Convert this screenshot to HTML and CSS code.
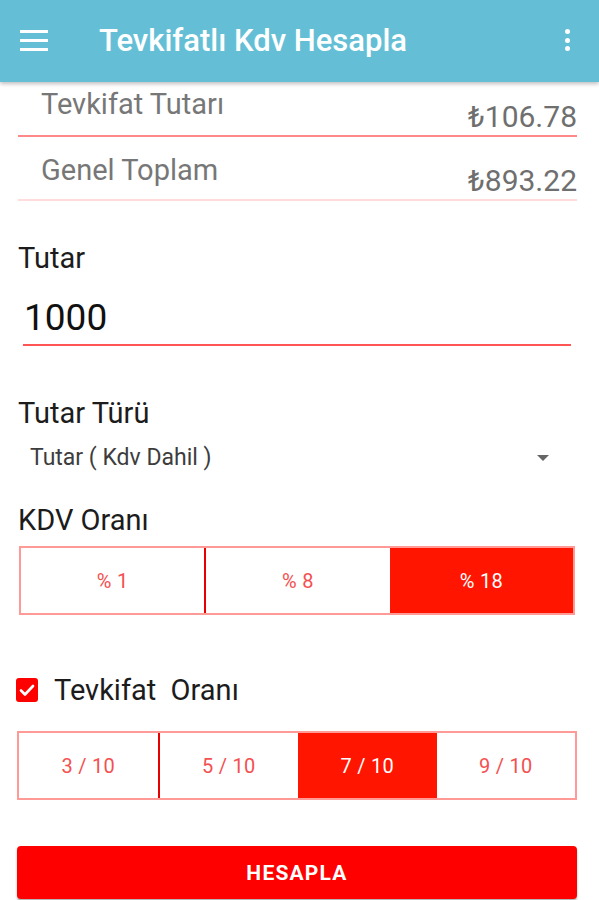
FILE: index.html
```html
<!DOCTYPE html>
<html lang="tr">
<head>
<meta charset="utf-8">
<title>Tevkifatlı Kdv Hesapla</title>
<link rel="stylesheet" href="styles.css">
</head>
<body>
<header class="toolbar">
  <div class="menu-icon"><span></span><span></span><span></span></div>
  <h1 class="title">Tevkifatlı Kdv Hesapla</h1>
  <div class="kebab"><span></span><span></span><span></span></div>
</header>
<main class="content">
  <div class="result-row first">
    <span class="result-label">Tevkifat Tutarı</span>
    <span class="result-value">₺106.78</span>
  </div>
  <div class="result-row second">
    <span class="result-label">Genel Toplam</span>
    <span class="result-value">₺893.22</span>
  </div>

  <div class="field-label tutar-label">Tutar</div>
  <div class="amount-input">1000</div>

  <div class="field-label type-label">Tutar Türü</div>
  <div class="spinner">
    <span>Tutar ( Kdv Dahil )</span>
    <span class="spinner-arrow"></span>
  </div>

  <div class="field-label kdv-label">KDV Oranı</div>
  <div class="segments kdv">
    <div class="seg">% 1</div>
    <div class="seg">% 8</div>
    <div class="seg active">% 18</div>
  </div>

  <div class="check-row">
    <span class="checkbox">
      <svg width="22" height="24" viewBox="0 0 22 24"><path d="M5 12.5 L9 16.5 L17 8" fill="none" stroke="#fff" stroke-width="2.6" stroke-linecap="round" stroke-linejoin="round"/></svg>
    </span>
    <span class="check-label">Tevkifat&nbsp; Oranı</span>
  </div>
  <div class="segments tev">
    <div class="seg">3 / 10</div>
    <div class="seg">5 / 10</div>
    <div class="seg active">7 / 10</div>
    <div class="seg">9 / 10</div>
  </div>

  <button class="calc-btn">HESAPLA</button>
</main>
</body>
</html>
```
FILE: styles.css
```css
* { box-sizing: border-box; }
html, body { margin: 0; padding: 0; }
body {
  width: 599px;
  height: 900px;
  overflow: hidden;
  background: #fff;
  font-family: Roboto, "Liberation Sans", sans-serif;
  color: #212121;
}
.toolbar {
  position: relative;
  z-index: 2;
  height: 82px;
  background: #64bfd6;
  display: flex;
  align-items: center;
  padding: 0 29px 0 20px;
  box-shadow: 0 2px 4px rgba(0,0,0,0.25);
}
.menu-icon {
  width: 28px;
  display: flex;
  flex-direction: column;
  gap: 6px;
  margin-top: -2px;
}
.menu-icon span {
  display: block;
  height: 3px;
  background: #fff;
}
.title {
  margin: 0 0 0 51px;
  font-size: 31px;
  line-height: 36px;
  font-weight: 500;
  color: #fff;
  flex: 1;
}
.kebab {
  display: flex;
  flex-direction: column;
  gap: 3.5px;
  margin-top: -2px;
}
.kebab span {
  width: 5px;
  height: 5px;
  border-radius: 50%;
  background: #fff;
}
.content {
  padding: 0 22px 0 18px;
}
.result-row {
  display: flex;
  justify-content: space-between;
  border-bottom: 2px solid #f88;
}
.result-row.first { height: 55px; padding: 8px 0 0 23px; }
.result-row.second { height: 64px; padding: 19px 0 0 23px; border-bottom-color: #fdd; }
.result-label {
  font-size: 29px;
  line-height: 28px;
  color: #777;
  align-self: flex-start;
}
.result-value {
  font-size: 30px;
  line-height: 30px;
  color: #6f6f6f;
  align-self: flex-end;
  padding-bottom: 3px;
}
.field-label {
  font-size: 29px;
  line-height: 28px;
  color: #1c1c1c;
}
.tutar-label { margin-top: 43px; }
.amount-input {
  margin: 26px 6px 0 5px;
  padding: 0 0 6px 1px;
  font-size: 37px;
  line-height: 40px;
  color: #111;
  border-bottom: 2px solid #f55;
}
.type-label { margin-top: 53px; }
.spinner {
  margin-top: 19px;
  padding: 0 28px 0 12px;
  display: flex;
  justify-content: space-between;
  align-items: center;
  font-size: 23px;
  line-height: 24px;
  color: #3d3d3d;
}
.spinner-arrow {
  width: 0;
  height: 0;
  border-left: 6.5px solid transparent;
  border-right: 6.5px solid transparent;
  border-top: 6.5px solid #666;
}
.kdv-label { margin-top: 36px; }
.segments {
  display: flex;
  border: 2px solid #ff9a96;
  height: 69px;
}
.segments.kdv { margin: 12px 2px 0 1px; }
.segments.tev { margin: 27px 0 0 -1px; }
.seg {
  flex: 1;
  display: flex;
  align-items: center;
  justify-content: center;
  font-size: 20px;
  color: #f45050;
  letter-spacing: 0.3px;
}
.seg + .seg { border-left: 2px solid #e80000; }
.seg.active { background: #ff1500; color: #fff; border-left: none; }
.seg.active + .seg { border-left: none; }
.check-row {
  margin-top: 61px;
  display: flex;
  align-items: center;
  margin-left: -2px;
}
.checkbox {
  width: 22px;
  height: 24px;
  border-radius: 3px;
  background: #f00;
  display: flex;
}
.check-label {
  margin-left: 16px;
  font-size: 29px;
  line-height: 28px;
  color: #1c1c1c;
}
.calc-btn {
  display: block;
  margin: 46px 0 0 -1px;
  width: 560px;
  height: 53px;
  border: none;
  border-radius: 4px;
  background: #ff0000;
  color: #fff;
  font-family: Roboto, "Liberation Sans", sans-serif;
  font-size: 21px;
  font-weight: 700;
  letter-spacing: 1.2px;
  box-shadow: 0 2px 2px rgba(0,0,0,0.3);
}
```
